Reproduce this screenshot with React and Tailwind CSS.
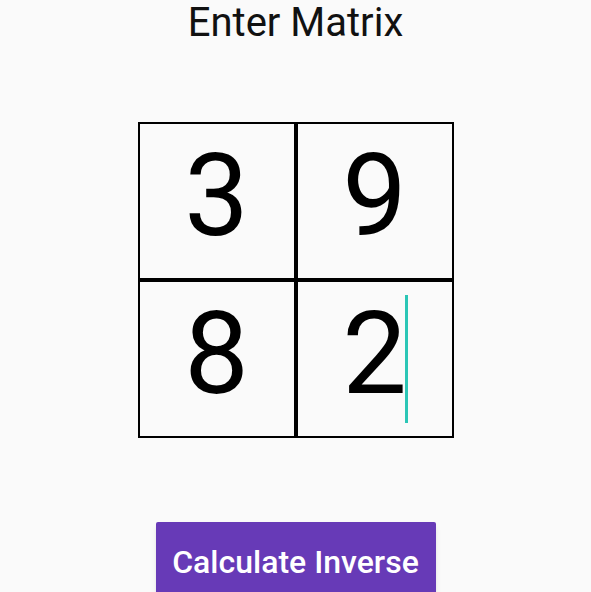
export default function App() {
  const cells = [
    { value: "3" },
    { value: "9" },
    { value: "8" },
    { value: "2", focused: true },
  ];

  return (
    <div
      className="h-[592px] overflow-hidden bg-[#fafafa] flex flex-col items-center"
      style={{ fontFamily: "Roboto, 'Noto Sans', sans-serif" }}
    >
      <h1 className="mt-[3px] text-[40px] leading-[40px] font-normal text-[#111]">
        Enter Matrix
      </h1>

      <div className="mt-[79px] grid grid-cols-[158px_158px] grid-rows-[158px_158px]">
        {cells.map((cell, i) => (
          <div
            key={i}
            className="border-2 border-black flex justify-center items-start pt-[14px]"
          >
            <span className="relative inline-block text-[115px] leading-[115px] text-black">
              {cell.value}
              {cell.focused && (
                <span className="absolute top-[-1px] left-[calc(100%-2px)] w-[3px] h-[128px] bg-[#2bc6b6]" />
              )}
            </span>
          </div>
        ))}
      </div>

      <button className="mt-[84px] w-[280px] pt-[24px] pb-[18px] bg-[#673ab7] rounded-[2px] text-white text-[32px] leading-[32px] font-medium shadow-md">
        Calculate Inverse
      </button>
    </div>
  );
}
